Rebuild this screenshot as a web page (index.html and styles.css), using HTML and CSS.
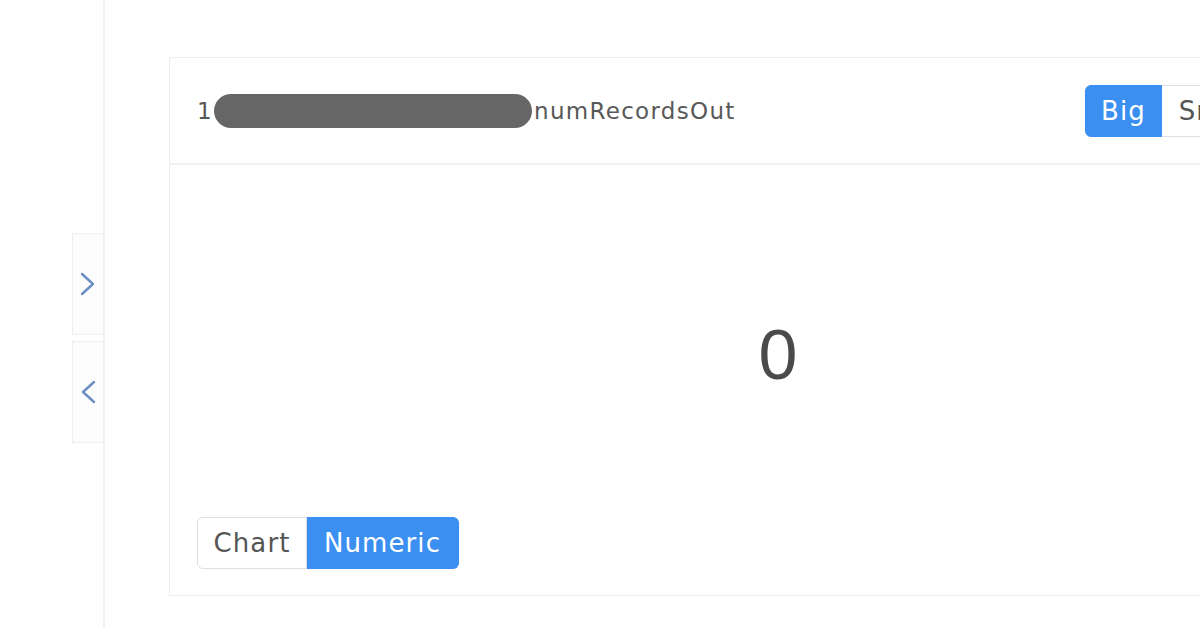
FILE: index.html
```html
<!DOCTYPE html>
<html lang="en">
<head>
<meta charset="utf-8">
<title>Metric</title>
<link rel="stylesheet" href="styles.css">
</head>
<body>
<div class="page">
  <aside class="side">
    <div class="tabs">
      <div class="tab">
        <svg class="chev" width="18" height="26" viewBox="0 0 18 26"><polyline points="3,3 14,13 3,23" fill="none" stroke="#6b8fc4" stroke-width="2.4" stroke-linecap="round" stroke-linejoin="round"/></svg>
      </div>
      <div class="tab">
        <svg class="chev" width="18" height="26" viewBox="0 0 18 26"><polyline points="15,3 4,13 15,23" fill="none" stroke="#6b8fc4" stroke-width="2.4" stroke-linecap="round" stroke-linejoin="round"/></svg>
      </div>
    </div>
  </aside>
  <main class="main">
    <section class="card">
      <header class="card-head">
        <div class="title"><span class="num">1</span><span class="redact"></span><span class="name">numRecordsOut</span></div>
        <div class="group">
          <button class="btn active">Big</button>
          <button class="btn">Small</button>
        </div>
      </header>
      <div class="card-body">
        <div class="value">0</div>
        <div class="group">
          <button class="btn">Chart</button>
          <button class="btn active">Numeric</button>
        </div>
      </div>
    </section>
  </main>
</div>
</body>
</html>
```
FILE: styles.css
```css
html, body {
  margin: 0;
  padding: 0;
  background: #ffffff;
  overflow: hidden;
  width: 1200px;
  height: 628px;
}
.page {
  display: flex;
  height: 628px;
  font-family: "DejaVu Sans", "Liberation Sans", sans-serif;
}
.side {
  width: 103px;
  flex: none;
  border-right: 2px solid #f1f1f1;
  box-sizing: content-box;
  padding-top: 233px;
}
.tabs {
  margin-left: 72px;
  display: flex;
  flex-direction: column;
  gap: 6px;
}
.tab {
  width: 30px;
  height: 100px;
  border: 1px solid #efefef;
  border-right: none;
  background: #fcfcfc;
  display: flex;
  align-items: center;
  justify-content: center;
}
.chev { display: block; }
.main {
  flex: none;
  padding-left: 64px;
  padding-top: 57px;
}
.card {
  width: 1216px;
  height: 539px;
  border: 1px solid #eeeeee;
  display: flex;
  flex-direction: column;
  box-sizing: border-box;
}
.card-head {
  height: 107px;
  flex: none;
  box-sizing: border-box;
  border-bottom: 2px solid #f1f1f1;
  display: flex;
  align-items: center;
  padding: 0 110px 0 27px;
}
.title {
  flex: 1;
  display: flex;
  align-items: center;
  color: #585858;
  font-size: 23px;
  letter-spacing: 1.3px;
}
.num { width: 17px; }
.redact {
  width: 318px;
  height: 34px;
  border-radius: 17px;
  background: #666666;
  margin-right: 2px;
}
.name { margin-top: 1px; }
.group {
  display: flex;
}
.btn {
  font-family: "DejaVu Sans", "Liberation Sans", sans-serif;
  font-size: 26px;
  letter-spacing: 1.1px;
  color: #555555;
  background: #ffffff;
  border: 1px solid #dcdfe6;
  height: 52px;
  padding: 0;
  margin: 0;
  display: flex;
  align-items: center;
  justify-content: center;
}
.btn.active {
  background: #3b8ff0;
  border-color: #3b8ff0;
  color: #ffffff;
}
.group .btn:first-child { border-radius: 6px 0 0 6px; }
.group .btn:last-child { border-radius: 0 6px 6px 0; border-left: none; }
.card-head .btn { width: 77px; }
.card-head .btn:last-child { width: 112px; }
.card-body {
  flex: 1;
  display: flex;
  flex-direction: column;
  padding: 26px 27px 26px;
}
.value {
  flex: 1;
  display: flex;
  align-items: center;
  justify-content: center;
  font-family: "Liberation Sans", Arial, sans-serif;
  font-size: 70px;
  color: #4a4a4a;
  padding-top: 2px;
  padding-left: 2px;
}
.card-body .btn:first-child { width: 110px; }
.card-body .btn:last-child { width: 152px; }
```
